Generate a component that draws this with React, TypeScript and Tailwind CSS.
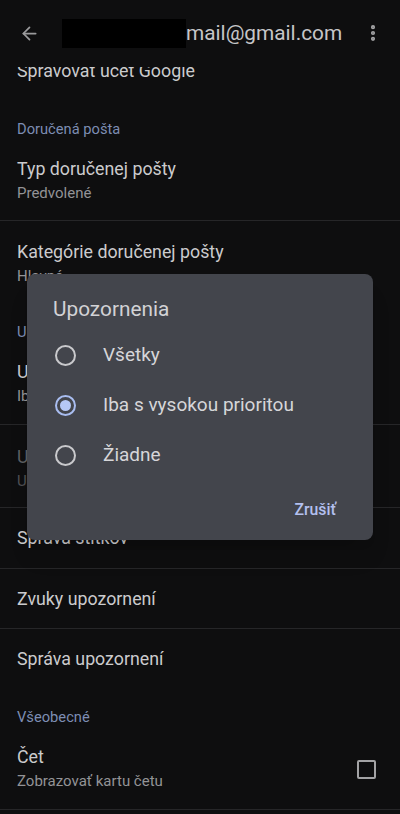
import React from "react";
import { ArrowLeft, EllipsisVertical } from "lucide-react";

const font = { fontFamily: "Roboto, 'Noto Sans', sans-serif" };

function Section({ label }: { label: string }) {
  return (
    <div className="h-[44px] pt-[18px] px-[17px]">
      <div className="text-[14.7px] leading-[20px] text-[#7d8db3]">{label}</div>
    </div>
  );
}

function TwoLine({ title, sub, top, h, dim, border = true }: { title: string; sub: string; top: string; h: string; dim?: boolean; border?: boolean }) {
  return (
    <div className={`${h} ${top} px-[17px] ${border ? "border-b border-[#262628]" : ""}`}>
      <div className={`text-[17.8px] leading-[24px] ${dim ? "text-[#5f6063]" : "text-[#cbcbcd]"}`}>{title}</div>
      <div className={`text-[15px] leading-[24px] ${dim ? "text-[#505154]" : "text-[#939396]"}`}>{sub}</div>
    </div>
  );
}

function OneLine({ title, h, border = true }: { title: string; h: string; border?: boolean }) {
  return (
    <div className={`${h} px-[17px] flex items-center ${border ? "border-b border-[#262628]" : ""}`}>
      <div className="text-[17.8px] leading-[24px] text-[#cbcbcd]">{title}</div>
    </div>
  );
}

function Radio({ label, checked }: { label: string; checked?: boolean }) {
  return (
    <div className="h-[50px] flex items-center">
      <div className="w-[76px] flex justify-center">
        <div
          className={`w-[21px] h-[21px] rounded-full border-2 flex items-center justify-center ${
            checked ? "border-[#a9bdf0]" : "border-[#c9c9cc]"
          }`}
        >
          {checked && <div className="w-[11px] h-[11px] rounded-full bg-[#b6c8f6]" />}
        </div>
      </div>
      <div className="text-[19px] leading-[26px] text-[#d6d6d9]">{label}</div>
    </div>
  );
}

export default function App() {
  return (
    <div className="relative w-[400px] h-[814px] overflow-hidden bg-[#0e0e0f]" style={font}>
      <div className="relative z-10 h-[67px] bg-[#0e0e0f] flex items-start">
        <div className="h-[66px] w-full flex items-center">
          <ArrowLeft className="ml-[19px] w-[21px] h-[21px] text-[#9a9a9c]" strokeWidth={2} />
          <div className="ml-[22px] w-[124px] h-[29px] bg-black" />
          <div className="text-[20.8px] leading-[28px] text-[#c6c6c8]">mail@gmail.com</div>
          <EllipsisVertical className="ml-auto mr-[17px] w-[20px] h-[20px] text-[#a3a3a5]" strokeWidth={3} />
        </div>
      </div>

      <div className="overflow-hidden">
        <div className="-mt-[26px]">
          <OneLine title="Spravovať účet Google" h="h-[60px]" border={false} />
          <Section label="Doručená pošta" />
          <TwoLine title="Typ doručenej pošty" sub="Predvolené" top="pt-[12px]" h="h-[76px]" />
          <TwoLine title="Kategórie doručenej pošty" sub="Hlavné" top="pt-[19px]" h="h-[83px]" border={false} />
          <Section label="Upozornenia" />
          <TwoLine title="Upozornenia" sub="Iba s vysokou prioritou" top="pt-[12px]" h="h-[77px]" />
          <TwoLine title="Upozornenia doručenej pošty" sub="Upozorniť raz" top="pt-[20px]" h="h-[83px]" dim />
          <OneLine title="Správa štítkov" h="h-[61px]" />
          <OneLine title="Zvuky upozornení" h="h-[60px]" />
          <OneLine title="Správa upozornení" h="h-[60px]" border={false} />
          <Section label="Všeobecné" />
          <div className="h-[77px] pt-[12px] pl-[17px] pr-[24px] flex items-start border-b border-[#262628]">
            <div className="flex-1">
              <div className="text-[17.8px] leading-[24px] text-[#cbcbcd]">Čet</div>
              <div className="text-[15px] leading-[24px] text-[#939396]">Zobrazovať kartu četu</div>
            </div>
            <div className="mt-[15px] w-[19px] h-[19px] border-2 border-[#a3a3a5] rounded-[2px]" />
          </div>
        </div>
      </div>

      <div className="absolute z-20 left-[27px] top-[274px] w-[346px] h-[266px] rounded-[8px] bg-[#43454c] shadow-xl">
        <div className="pt-[21px] pl-[26px] text-[20.8px] leading-[28px] text-[#d2d2d5]">Upozornenia</div>
        <div className="mt-[7px]">
          <Radio label="Všetky" />
          <Radio label="Iba s vysokou prioritou" checked />
          <Radio label="Žiadne" />
        </div>
        <div className="mt-[20px] flex justify-end pr-[37px]">
          <div className="text-[15.8px] leading-[20px] font-medium text-[#b3c0ef]">Zrušiť</div>
        </div>
      </div>
    </div>
  );
}
